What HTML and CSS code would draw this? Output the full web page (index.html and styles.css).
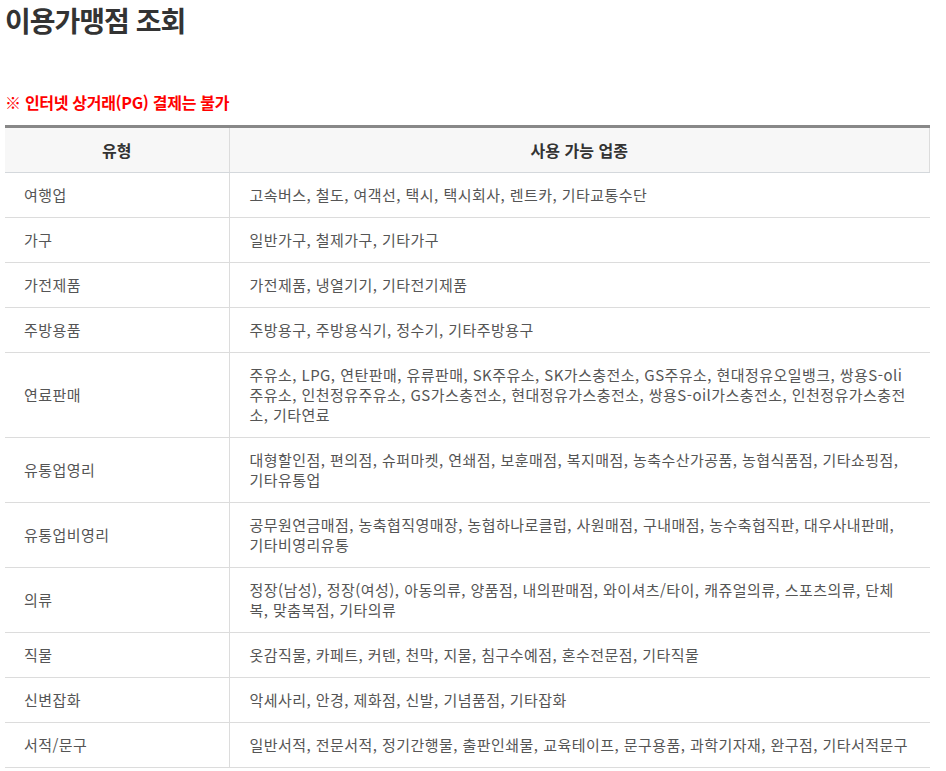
FILE: index.html
```html
<!DOCTYPE html>
<html lang="ko">
<head>
<meta charset="utf-8">
<title>이용가맹점 조회</title>
<link rel="stylesheet" href="styles.css">
</head>
<body>
<div class="page">
  <h1 class="title">이용가맹점 조회</h1>
  <p class="notice">※ 인터넷 상거래(PG) 결제는 불가</p>
  <table class="merchant">
    <colgroup><col class="c1"><col class="c2"></colgroup>
    <thead>
      <tr><th>유형</th><th>사용 가능 업종</th></tr>
    </thead>
    <tbody>
      <tr><td>여행업</td><td>고속버스, 철도, 여객선, 택시, 택시회사, 렌트카, 기타교통수단</td></tr>
      <tr><td>가구</td><td>일반가구, 철제가구, 기타가구</td></tr>
      <tr><td>가전제품</td><td>가전제품, 냉열기기, 기타전기제품</td></tr>
      <tr><td>주방용품</td><td>주방용구, 주방용식기, 정수기, 기타주방용구</td></tr>
      <tr><td>연료판매</td><td>주유소, LPG, 연탄판매, 유류판매, SK주유소, SK가스충전소, GS주유소, 현대정유오일뱅크, 쌍용S-oli 주유소, 인천정유주유소, GS가스충전소, 현대정유가스충전소, 쌍용S-oil가스충전소, 인천정유가스충전소, 기타연료</td></tr>
      <tr><td>유통업영리</td><td>대형할인점, 편의점, 슈퍼마켓, 연쇄점, 보훈매점, 복지매점, 농축수산가공품, 농협식품점, 기타쇼핑점, 기타유통업</td></tr>
      <tr><td>유통업비영리</td><td>공무원연금매점, 농축협직영매장, 농협하나로클럽, 사원매점, 구내매점, 농수축협직판, 대우사내판매, 기타비영리유통</td></tr>
      <tr><td>의류</td><td>정장(남성), 정장(여성), 아동의류, 양품점, 내의판매점, 와이셔츠/타이, 캐쥬얼의류, 스포츠의류, 단체복, 맞춤복점, 기타의류</td></tr>
      <tr><td>직물</td><td>옷감직물, 카페트, 커텐, 천막, 지물, 침구수예점, 혼수전문점, 기타직물</td></tr>
      <tr><td>신변잡화</td><td>악세사리, 안경, 제화점, 신발, 기념품점, 기타잡화</td></tr>
      <tr><td>서적/문구</td><td>일반서적, 전문서적, 정기간행물, 출판인쇄물, 교육테이프, 문구용품, 과학기자재, 완구점, 기타서적문구</td></tr>
    </tbody>
  </table>
</div>
</body>
</html>
```

FILE: styles.css
```css
html, body {
  margin: 0;
  padding: 0;
  background: #fff;
}
body {
  font-family: "Noto Sans CJK KR", "Noto Sans", sans-serif;
  color: #555;
}
.page {
  padding: 0 16px 0 5px;
}
.title {
  margin: 0;
  padding-top: 1px;
  font-size: 28px;
  line-height: 38px;
  font-weight: 700;
  color: #333;
  letter-spacing: -1px;
}
.notice {
  margin: 51px 0 0;
  font-size: 16px;
  line-height: 24px;
  font-weight: 700;
  color: #f00;
  letter-spacing: -0.3px;
}
.merchant {
  margin-top: 11px;
  width: 925px;
  border-collapse: collapse;
  border-top: 3px solid #888;
  table-layout: fixed;
}
.merchant col.c1 { width: 224px; }
.merchant th {
  background: #f7f7f7;
  color: #333;
  font-size: 16px;
  font-weight: 700;
  height: 44px;
  padding: 0;
  text-align: center;
  border-bottom: 1px solid #d4d8dc;
  border-right: 1px solid #dcdcdc;
}
.merchant td {
  font-size: 15px;
  letter-spacing: 0.45px;
  line-height: 20px;
  padding: 12px 20px 12px 20px;
  border-bottom: 1px solid #dcdcdc;
  vertical-align: middle;
  text-align: left;
}
.merchant td:first-child {
  padding-left: 19px;
  border-right: 1px solid #dcdcdc;
}
```
